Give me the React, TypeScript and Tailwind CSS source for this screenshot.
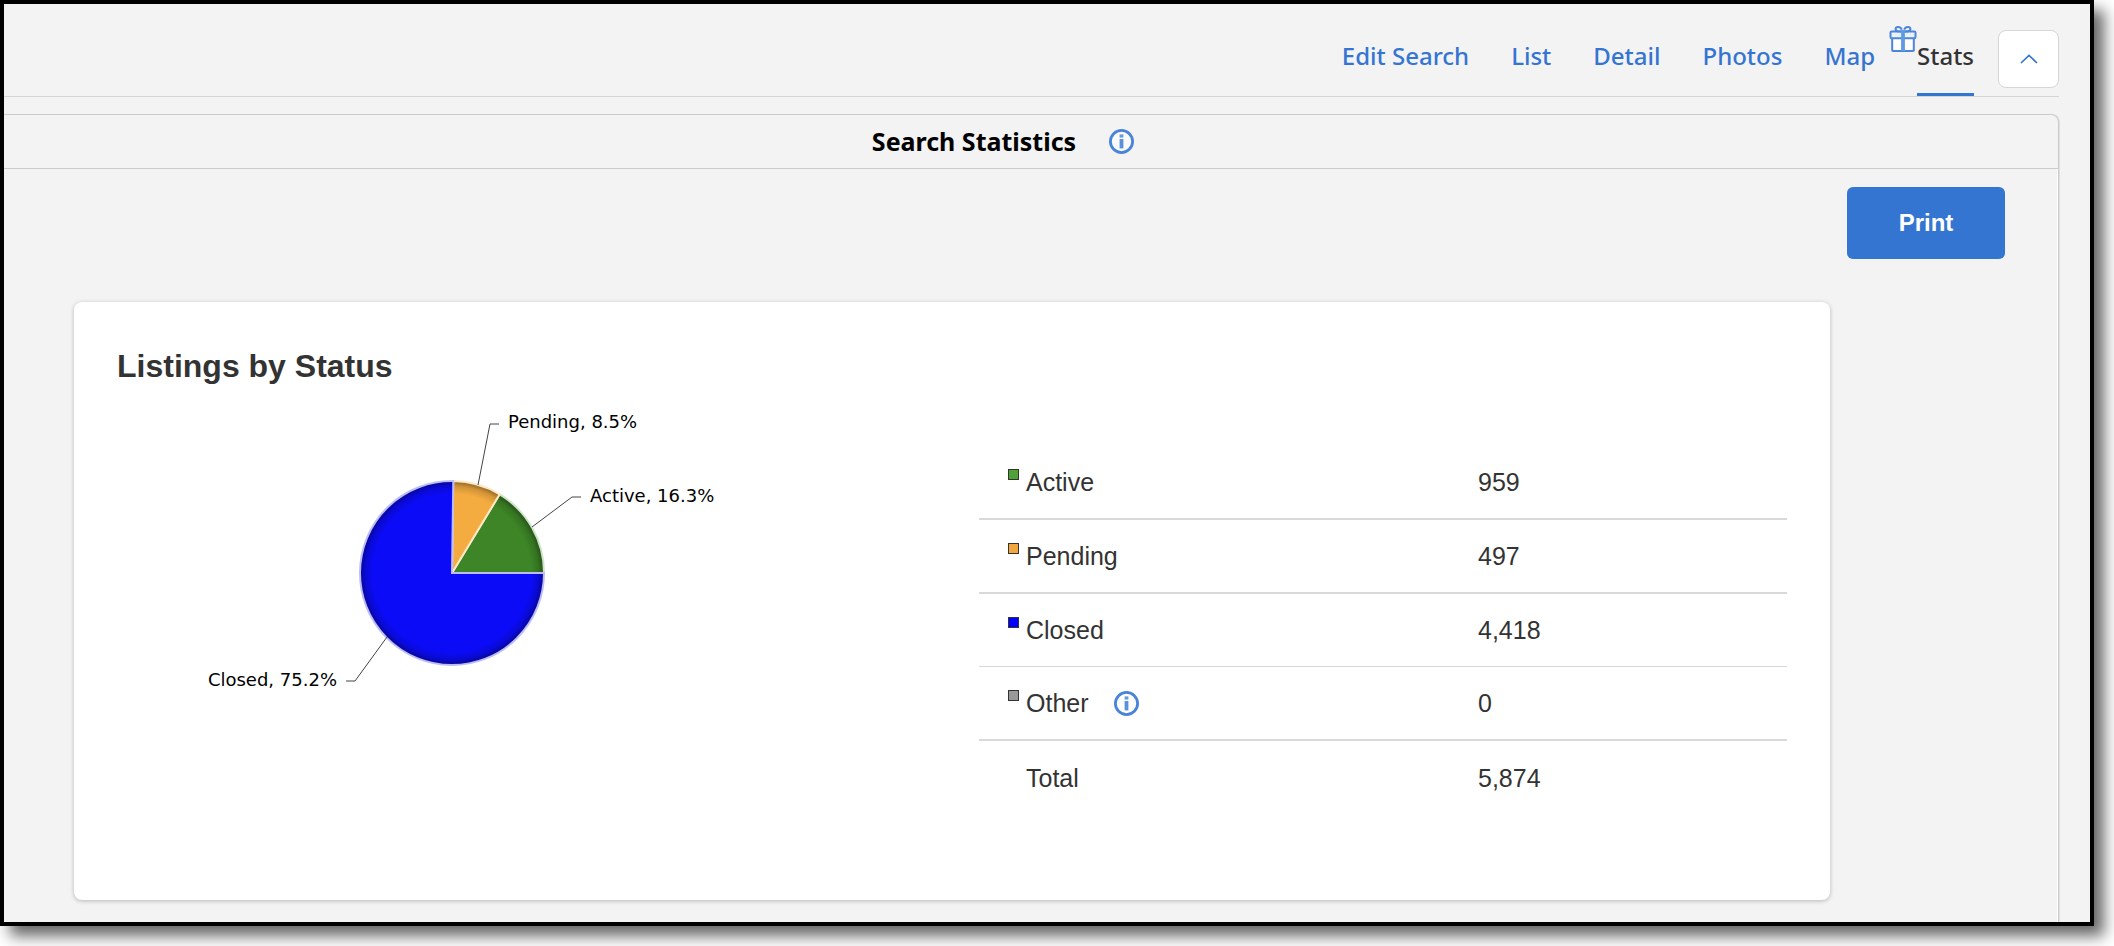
import React from "react";

type Status = {
  name: string;
  count: string;
  swatch?: string;
  border?: string;
  hasInfo?: boolean;
};

const TABS = ["Edit Search", "List", "Detail", "Photos", "Map", "Stats"];

const STATUSES: Status[] = [
  { name: "Active", count: "959", swatch: "bg-[#4fa336]", border: "h-[74px] border-b-2" },
  { name: "Pending", count: "497", swatch: "bg-[#f2a63b]", border: "h-[74px] border-b-2" },
  { name: "Closed", count: "4,418", swatch: "bg-[#0000ff]", border: "h-[73px] border-b" },
  { name: "Other", count: "0", swatch: "bg-[#999999]", border: "h-[74px] border-b-2", hasInfo: true },
  { name: "Total", count: "5,874", border: "h-[73px]" },
];

// angles are counter-clockwise degrees from 3 o'clock
const SLICES = [
  { name: "Active", from: 0, to: 58.8, fill: "#3d8526", stroke: "#cfe3c9" },
  { name: "Pending", from: 58.8, to: 89.2, fill: "#f4ac40", stroke: "#fde8c6" },
  { name: "Closed", from: 89.2, to: 360, fill: "#0b0bf7", stroke: "#bcbcfb" },
];

const CALLOUTS = [
  { label: "Pending, 8.5%", line: "361,99 373,38 382,38", x: 391, y: 42, anchor: "start" as const },
  { label: "Active, 16.3%", line: "415,141 455,111 464,111", x: 473, y: 116, anchor: "start" as const },
  { label: "Closed, 75.2%", line: "270,251 238,295 229,295", x: 220, y: 300, anchor: "end" as const },
];

const CX = 335;
const CY = 187;
const R = 92;

function slicePath(from: number, to: number): string {
  const point = (deg: number) => {
    const rad = (deg * Math.PI) / 180;
    return `${(CX + R * Math.cos(rad)).toFixed(2)} ${(CY - R * Math.sin(rad)).toFixed(2)}`;
  };
  const large = to - from > 180 ? 1 : 0;
  return `M${CX} ${CY} L${point(from)} A${R} ${R} 0 ${large} 0 ${point(to)} Z`;
}

const InfoButton: React.FC<{ label: string }> = ({ label }) => (
  <button type="button" aria-label={label} className="shrink-0 cursor-pointer">
    <svg viewBox="0 0 25 25" className="block size-[25px]" fill="none">
      <circle cx="12.5" cy="12.5" r="11.1" fill="#fff" fillOpacity="0.6" stroke="#4a84d8" strokeWidth="2.8" />
      <rect x="10.6" y="5.4" width="3.8" height="3.2" fill="#6799df" />
      <rect x="10.6" y="10" width="3.8" height="9.4" fill="#5a90dc" />
    </svg>
  </button>
);

const GiftIcon = () => (
  <svg viewBox="0 0 28 28" className="absolute right-full top-[21px] size-7" fill="none" stroke="#4a86d9" strokeWidth="2">
    <rect x="3.2" y="13" width="21.6" height="13" rx="0.8" fill="#fff" />
    <rect x="1.5" y="6.4" width="25" height="6.8" rx="1.2" fill="#eaf1fb" />
    <path d="M12.6 6.2C10.8 6.6 6.4 6.6 6.6 3.9C6.8 1.2 11.6 1.2 12.8 4.6M15.4 6.2C17.2 6.6 21.6 6.6 21.4 3.9C21.2 1.2 16.4 1.2 15.2 4.6" />
    <path d="M14 5V26" stroke="#5f9be3" strokeWidth="3.8" />
  </svg>
);

const PieChart = () => (
  <svg viewBox="0 0 600 330" className="h-[330px] w-[600px] shrink-0" role="img" aria-label="Listings by Status">
    <defs>
      <radialGradient id="pieShade" gradientUnits="userSpaceOnUse" cx={CX} cy={CY} r={R}>
        <stop offset="0.86" stopColor="#000" stopOpacity="0" />
        <stop offset="0.94" stopColor="#000" stopOpacity="0.14" />
        <stop offset="1" stopColor="#000" stopOpacity="0.42" />
      </radialGradient>
    </defs>
    {SLICES.map((s) => (
      <g key={s.name}>
        <path d={slicePath(s.from, s.to)} fill={s.fill} />
        <path d={slicePath(s.from, s.to)} fill="url(#pieShade)" stroke={s.stroke} strokeWidth="2" />
      </g>
    ))}
    {CALLOUTS.map((c) => (
      <g key={c.label}>
        <polyline points={c.line} fill="none" stroke="#444" strokeWidth="1" />
        <text
          x={c.x}
          y={c.y}
          textAnchor={c.anchor}
          className="fill-black font-['Verdana','DejaVu_Sans',sans-serif] text-lg"
        >
          {c.label}
        </text>
      </g>
    ))}
  </svg>
);

export default function App() {
  return (
    <div className="bg-white pr-5 pb-5 font-['Liberation_Sans',Arial,sans-serif] text-[#333]">
      <div className="border-4 border-black bg-[#f3f3f3] shadow-[10px_10px_14px_rgba(0,0,0,0.6)]">
        <div className="mr-[31px]">
          {/* view tabs */}
          <nav className="flex h-[93px] justify-end border-b border-[#d6d6d6] font-['Noto_Sans','Open_Sans',sans-serif] text-2xl font-medium">
            <ul className="flex gap-[42px]">
              {TABS.map((tab) => (
                <li key={tab} className="relative flex">
                  {tab === "Stats" && <GiftIcon />}
                  <a
                    href="#"
                    aria-current={tab === "Stats" ? "page" : undefined}
                    className={`flex items-center border-b-[3px] pt-3.5 ${
                      tab === "Stats" ? "border-[#3475d2] text-[#333]" : "border-transparent text-[#3475d2]"
                    }`}
                  >
                    {tab}
                  </a>
                </li>
              ))}
            </ul>
            <button
              type="button"
              aria-label="Collapse"
              className="mb-2 ml-6 flex h-[58px] w-[61px] items-center justify-center self-end rounded-lg border border-[#d6d6d6] bg-white"
            >
              <svg viewBox="0 0 18 10" className="h-2.5 w-[18px]" fill="none" stroke="#3475d2" strokeWidth="1.7">
                <path d="M1 9L9 1.4L17 9" />
              </svg>
            </button>
          </nav>

          {/* statistics panel */}
          <section className="mt-[17px] rounded-tr-lg border-t border-r border-[#cbcbcb] shadow-[1px_0_1px_rgba(0,0,0,0.08)]">
            <header className="flex h-[54px] items-center justify-center gap-[33px] border-b border-[#cbcbcb] pr-14">
              <h1 className="font-['Noto_Sans','Open_Sans',sans-serif] text-[25px] font-bold text-black">
                Search Statistics
              </h1>
              <InfoButton label="About search statistics" />
            </header>

            <div className="border-r border-white pt-[18px] pb-[22px]">
              <div className="flex justify-end pr-[52px]">
                <button type="button" className="h-[72px] w-[158px] rounded-md bg-[#3475d2] text-2xl font-bold text-white">
                  Print
                </button>
              </div>

              <div className="mt-[43px] mr-[227px] ml-[70px] rounded-lg bg-white px-[43px] pt-11 pb-[86px] shadow-[0_1px_4px_rgba(0,0,0,0.25)]">
                <h2 className="text-[32px] leading-10 font-bold">Listings by Status</h2>
                <div className="flex justify-between">
                  <PieChart />
                  <table className="mt-[60px] w-[808px] table-fixed border-separate border-spacing-0 text-left text-[25px] leading-[26px]">
                    <tbody>
                      {STATUSES.map((s) => (
                        <tr key={s.name}>
                          <th scope="row" className={`w-[499px] border-[#d9d9d9] pl-[29px] font-normal ${s.border}`}>
                            <div className="flex items-center">
                              <span
                                className={`mr-[7px] size-[11px] self-start ${s.swatch ? `border border-[#333] ${s.swatch}` : ""}`}
                              />
                              <span className="mr-[25px]">{s.name}</span>
                              {s.hasInfo && <InfoButton label="About other statuses" />}
                            </div>
                          </th>
                          <td className={`border-[#d9d9d9] ${s.border}`}>{s.count}</td>
                        </tr>
                      ))}
                    </tbody>
                  </table>
                </div>
              </div>
            </div>
          </section>
        </div>
      </div>
    </div>
  );
}
